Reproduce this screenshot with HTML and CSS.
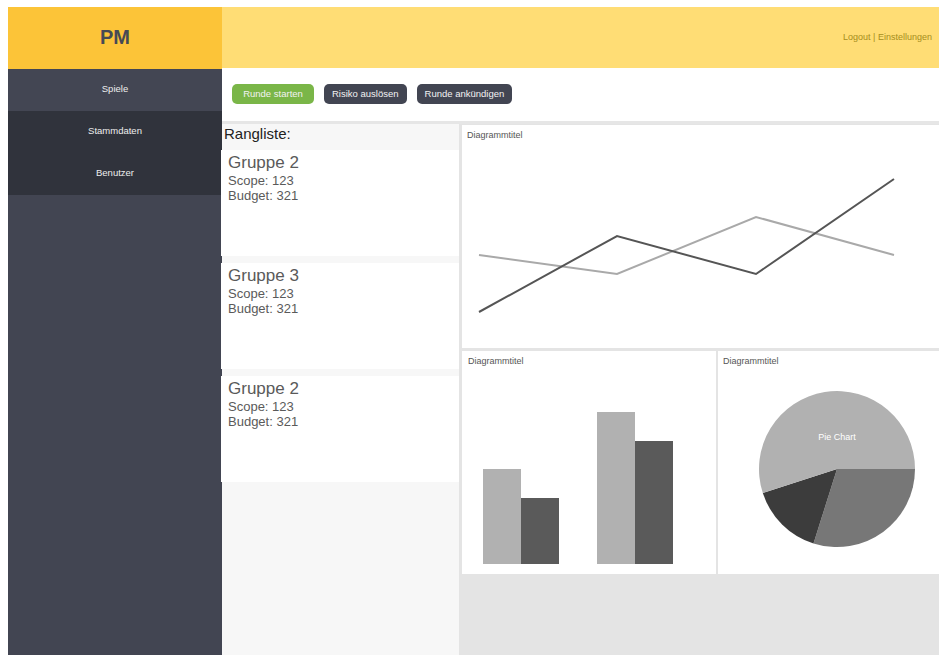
FILE: index.html
```html
<!DOCTYPE html>
<html lang="de">
<head>
<meta charset="utf-8">
<title>PM</title>
<link rel="stylesheet" href="styles.css">
</head>
<body>
<div class="app">
  <div class="brand">PM</div>
  <header class="topbar">
    <span class="user-links">Logout | Einstellungen</span>
  </header>

  <nav class="sidebar">
    <a class="nav-item nav-item--active">Spiele</a>
    <a class="nav-item">Stammdaten</a>
    <a class="nav-item">Benutzer</a>
  </nav>

  <main class="main">
    <div class="toolbar">
      <button class="btn btn--green">Runde starten</button>
      <button class="btn btn--dark">Risiko auslösen</button>
      <button class="btn btn--dark">Runde ankündigen</button>
    </div>

    <div class="content">
      <section class="ranking">
        <h2 class="ranking-title">Rangliste:</h2>
        <div class="team-card">
          <div class="team-name">Gruppe 2</div>
          <div class="team-stat">Scope: 123</div>
          <div class="team-stat">Budget: 321</div>
        </div>
        <div class="team-card">
          <div class="team-name">Gruppe 3</div>
          <div class="team-stat">Scope: 123</div>
          <div class="team-stat">Budget: 321</div>
        </div>
        <div class="team-card">
          <div class="team-name">Gruppe 2</div>
          <div class="team-stat">Scope: 123</div>
          <div class="team-stat">Budget: 321</div>
        </div>
      </section>

      <section class="charts">
        <div class="chart chart--wide">
          <div class="chart-title">Diagrammtitel</div>
          <svg class="chart-svg" width="477" height="223" viewBox="0 0 477 223">
            <polyline points="17,130 155,149 294,92 432,130" fill="none" stroke="#a9a9a9" stroke-width="2"/>
            <polyline points="17,187 155,111 294,149 432,54" fill="none" stroke="#555555" stroke-width="2"/>
          </svg>
        </div>
        <div class="chart-row">
          <div class="chart chart--bar">
            <div class="chart-title">Diagrammtitel</div>
            <svg class="chart-svg" width="254" height="223" viewBox="0 0 254 223">
              <rect x="21" y="118" width="38" height="95" fill="#b1b1b1"/>
              <rect x="59" y="147" width="38" height="66" fill="#5a5a5a"/>
              <rect x="135" y="61" width="38" height="152" fill="#b1b1b1"/>
              <rect x="173" y="90" width="38" height="123" fill="#5a5a5a"/>
            </svg>
          </div>
          <div class="chart chart--pie">
            <div class="chart-title">Diagrammtitel</div>
            <svg class="chart-svg" width="221" height="223" viewBox="0 0 221 223">
              <path d="M119 118 L197 118 A78 78 0 0 1 95.5 192.4 Z" fill="#777777"/>
              <path d="M119 118 L95.5 192.4 A78 78 0 0 1 44.8 142.1 Z" fill="#3c3c3c"/>
              <path d="M119 118 L44.8 142.1 A78 78 0 1 1 197 118 Z" fill="#b1b1b1"/>
              <text x="119" y="89" text-anchor="middle" class="pie-label">Pie Chart</text>
            </svg>
          </div>
        </div>
      </section>
    </div>
  </main>
</div>
</body>
</html>
```

FILE: styles.css
```css
* {
  box-sizing: border-box;
}

html,
body {
  margin: 0;
  padding: 0;
  background: #ffffff;
  overflow: hidden;
}

body {
  padding: 7px 0 0 8px;
  font-family: "Liberation Sans", Arial, sans-serif;
}

.app {
  display: grid;
  grid-template-columns: 214px 717px;
  grid-template-rows: 62px 586px;
  width: 931px;
  height: 648px;
}

/* top bar */
.brand {
  background: #fcc438;
  color: #474a55;
  font-weight: bold;
  font-size: 20px;
  display: flex;
  align-items: center;
  justify-content: center;
  padding-bottom: 2px;
}

.topbar {
  background: #ffdd75;
  display: flex;
  align-items: center;
  justify-content: flex-end;
  padding: 0 7px 2px 0;
  height: 61px;
}

.user-links {
  font-size: 9px;
  color: #a68e1c;
}

/* side navigation */
.sidebar {
  background: #424552;
  display: flex;
  flex-direction: column;
}

.nav-item {
  height: 42px;
  display: flex;
  align-items: center;
  justify-content: center;
  padding-bottom: 4px;
  font-size: 9.5px;
  color: #eeeeee;
  background: #30333c;
}

.nav-item--active {
  background: #434653;
}

/* main column */
.main {
  display: flex;
  flex-direction: column;
  margin-top: -1px;
  min-height: 0;
}

.toolbar {
  height: 56px;
  flex: none;
  display: flex;
  align-items: center;
  gap: 10px;
  padding: 0 0 2px 10px;
  background: #ffffff;
  border-bottom: 3px solid #e6e6e6;
}

.btn {
  font-family: "Liberation Sans", Arial, sans-serif;
  font-size: 9.5px;
  height: 20px;
  padding: 0 8px;
  border: none;
  border-radius: 5px;
  color: #f2f2f2;
  cursor: pointer;
}

.btn--green {
  background: #7ab648;
  width: 82px;
}

.btn--dark {
  background: #424552;
}

.content {
  flex: 1;
  display: grid;
  grid-template-columns: 237px 480px;
  min-height: 0;
}

/* ranking list */
.ranking {
  background: #f7f7f7;
  display: flex;
  flex-direction: column;
  gap: 7px;
}

.ranking-title {
  margin: 0 0 -1px;
  height: 20px;
  padding: 1px 0 0 2px;
  font-size: 15px;
  font-weight: normal;
  color: #222222;
}

.team-card {
  background: #ffffff;
  height: 106px;
  margin-left: -1px;
  padding: 3px 7px;
  color: #5a5a5a;
}

.team-name {
  font-size: 17px;
  line-height: 20px;
}

.team-stat {
  font-size: 13px;
  line-height: 15px;
}

/* charts */
.charts {
  background: #e4e4e4;
  padding: 1px 0 0 3px;
  display: flex;
  flex-direction: column;
  gap: 3px;
}

.chart {
  background: #ffffff;
  position: relative;
  height: 223px;
}

.chart--wide {
  width: 477px;
}

.chart-row {
  display: flex;
  gap: 2px;
}

.chart--bar {
  width: 254px;
}

.chart--pie {
  width: 221px;
}

.chart-title {
  position: absolute;
  left: 5px;
  top: 5px;
  font-size: 9px;
  color: #555555;
}

.chart--bar .chart-title {
  left: 6px;
}

.chart-svg {
  display: block;
}

.pie-label {
  font-family: "Liberation Sans", Arial, sans-serif;
  font-size: 9px;
  fill: #ffffff;
}
```
